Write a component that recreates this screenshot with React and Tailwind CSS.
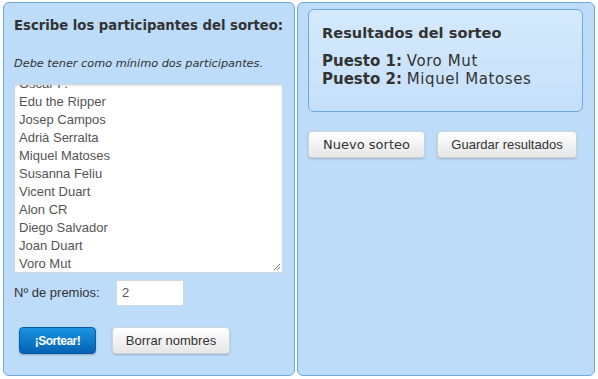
import React from 'react';

const names = [
  'Oscar P.',
  'Edu the Ripper',
  'Josep Campos',
  'Adrià Serralta',
  'Miquel Matoses',
  'Susanna Feliu',
  'Vicent Duart',
  'Alon CR',
  'Diego Salvador',
  'Joan Duart',
  'Voro Mut',
];

const verdana = { fontFamily: '"DejaVu Sans", Verdana, sans-serif' };
const verdanaNarrow = { fontFamily: '"DejaVu Sans Condensed", "DejaVu Sans", sans-serif' };
const helvetica = { fontFamily: '"Liberation Sans", Arial, sans-serif' };

function App() {
  return (
    <div className="w-[598px] h-[379px] bg-white flex gap-[2px] pt-[2px] pl-[3px]">
      {/* participantes */}
      <div className="w-[292px] h-[374px] rounded-[6px] border border-[#6fa8dc] bg-[#bcdcf9] pl-[10px] pt-[12px]">
        <h2 className="text-[14.7px] leading-[20px] font-bold text-[#333]" style={verdanaNarrow}>
          Escribe los participantes del sorteo:
        </h2>
        <p className="mt-[22px] text-[11.3px] leading-[14px] italic text-[#333]" style={verdana}>
          Debe tener como mínimo dos participantes.
        </p>
        <div className="relative mt-[13px] w-[269px] h-[189px] overflow-hidden rounded-[2px] border border-[#d3d6da] bg-white shadow-[inset_0_1px_2px_rgba(0,0,0,0.1)]">
          <div className="-mt-[10px] pl-[4px] text-[13px] leading-[18px] text-[#555]" style={helvetica}>
            {names.map((n) => (
              <div key={n}>{n}</div>
            ))}
          </div>
          <svg className="absolute right-[2px] bottom-[2px]" width="7" height="7" viewBox="0 0 7 7">
            <path d="M1 7 L7 1 M4 7 L7 4" stroke="#777" strokeWidth="1" />
          </svg>
        </div>
        <div className="mt-[7px] flex items-center" style={helvetica}>
          <span className="w-[102px] text-[13px] text-[#333]">Nº de premios:</span>
          <div className="w-[68px] h-[26px] rounded-[2px] border border-[#d3d6da] bg-white flex items-center pl-[5px] text-[13px] text-[#555]">
            2
          </div>
        </div>
        <div className="mt-[21px] ml-[5px] flex gap-[16px]" style={helvetica}>
          <button className="w-[77px] h-[27px] rounded-[4px] border border-[#0a5aa6] bg-gradient-to-b from-[#1a94e0] to-[#0662b4] text-white text-[12px] font-bold tracking-[-0.5px] shadow-[0_1px_2px_rgba(0,0,0,0.25)]">
            ¡Sortear!
          </button>
          <button className="w-[118px] h-[27px] rounded-[4px] border border-[#d0d3d6] bg-gradient-to-b from-white to-[#e6e6e6] text-[#333] text-[13px] shadow-[0_1px_2px_rgba(0,0,0,0.2)]">
            Borrar nombres
          </button>
        </div>
      </div>

      {/* resultados */}
      <div className="w-[298px] h-[374px] rounded-[6px] border border-[#6fa8dc] bg-[#bcdcf9] pl-[10px] pt-[6px]">
        <div className="w-[275px] h-[103px] rounded-[6px] border border-[#6fa8dc] bg-gradient-to-b from-[#d4e9fc] to-[#c6e0fa] pl-[13px] pt-[13px] text-[#333]" style={verdana}>
          <h3 className="text-[14.6px] leading-[20px] font-bold">Resultados del sorteo</h3>
          <div className="mt-[9px] text-[15px] leading-[18px]">
            <div>
              <span className="font-bold">Puesto 1:</span>{' '}
              <span className="tracking-[0.6px]">Voro Mut</span>
            </div>
            <div>
              <span className="font-bold">Puesto 2:</span>{' '}
              <span className="tracking-[0.6px]">Miquel Matoses</span>
            </div>
          </div>
        </div>
        <div className="mt-[19px] flex gap-[12px]">
          <button
            className="w-[117px] h-[27px] rounded-[4px] border border-[#d0d3d6] bg-gradient-to-b from-white to-[#e6e6e6] text-[#333] text-[13px] shadow-[0_1px_2px_rgba(0,0,0,0.2)]"
            style={verdana}
          >
            Nuevo sorteo
          </button>
          <button
            className="w-[140px] h-[27px] rounded-[4px] border border-[#d0d3d6] bg-gradient-to-b from-white to-[#e6e6e6] text-[#333] text-[13px] shadow-[0_1px_2px_rgba(0,0,0,0.2)]"
            style={helvetica}
          >
            Guardar resultados
          </button>
        </div>
      </div>
    </div>
  );
}

export default App;
